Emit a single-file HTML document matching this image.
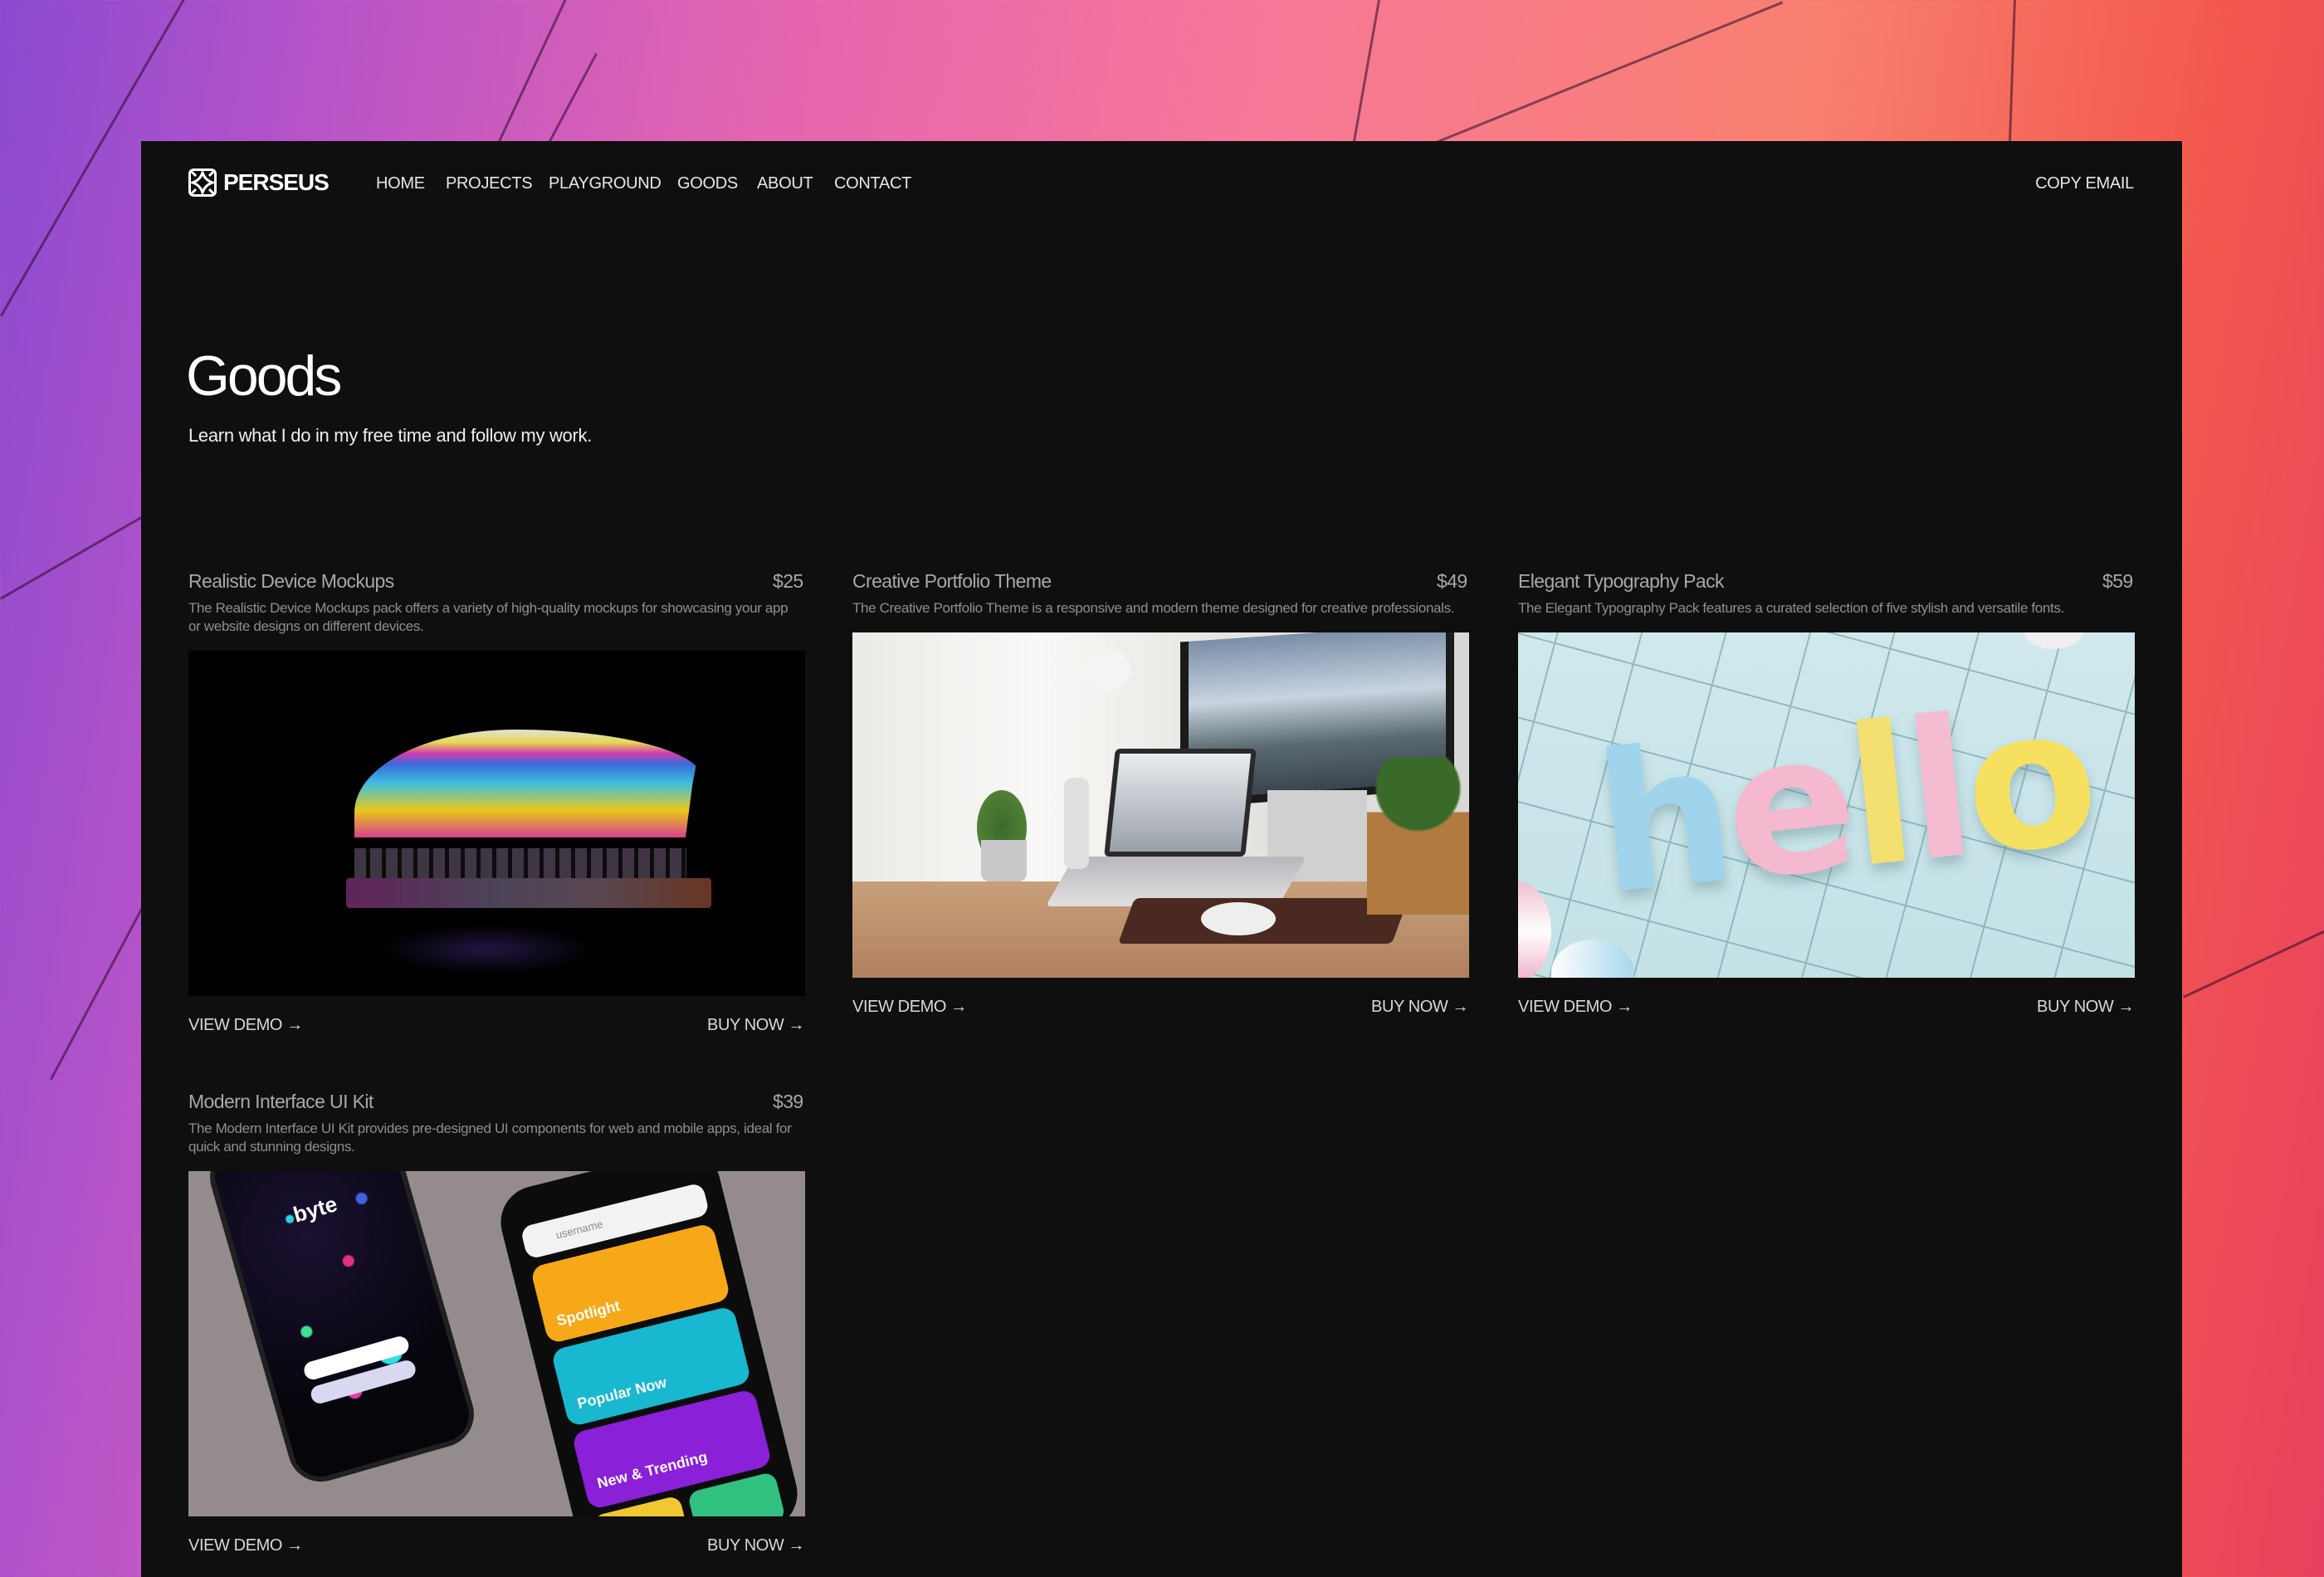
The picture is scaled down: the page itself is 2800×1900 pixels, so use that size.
<!DOCTYPE html>
<html><head><meta charset="utf-8"><style>
*{margin:0;padding:0;box-sizing:border-box}
body{width:2800px;height:1900px;overflow:hidden;font-family:"Liberation Sans",sans-serif;position:relative;
background:linear-gradient(100deg,#8a4ad0 0%,#b553c9 12%,#e465b0 30%,#f77896 50%,#f8806f 70%,#f35a4e 85%,#e8405e 100%)}
.bgl{position:absolute;height:3px;background:rgba(40,10,40,.55);transform-origin:0 0}
.panel{position:absolute;left:170px;top:170px;width:2459px;height:1730px;background:#0f0f0f}
.a{position:absolute;white-space:nowrap}
.nav{font-size:20px;color:#e6e6e6;top:210px;letter-spacing:-.3px}
.t{font-size:23px;color:#a8a8a8;letter-spacing:-.6px}
.d{font-size:17px;color:#8e8e8e;letter-spacing:-.35px;line-height:22px}
.b{font-size:20px;color:#d8d8d8;letter-spacing:-.4px}
.img{position:absolute;width:743px;height:416px;overflow:hidden}
</style></head><body>
<div class="bgl" style="left:0;top:380px;width:500px;transform:rotate(-60deg)"></div>
<div class="bgl" style="left:60px;top:1300px;width:1400px;transform:rotate(-62deg)"></div>
<div class="bgl" style="left:600px;top:170px;width:300px;transform:rotate(-65deg)"></div>
<div class="bgl" style="left:1630px;top:170px;width:200px;transform:rotate(-80deg)"></div>
<div class="bgl" style="left:1730px;top:170px;width:450px;transform:rotate(-22deg)"></div>
<div class="bgl" style="left:2420px;top:170px;width:180px;transform:rotate(-88deg)"></div>
<div class="bgl" style="left:2630px;top:1200px;width:200px;transform:rotate(-25deg)"></div>
<div class="bgl" style="left:0;top:720px;width:200px;transform:rotate(-30deg)"></div>

<div class="panel"></div>
<svg class="a" style="left:227px;top:203px" width="34" height="34" viewBox="0 0 34 34"><rect x="1.5" y="1.5" width="31" height="31" rx="5" fill="none" stroke="#fff" stroke-width="3"/><path d="M17 5 C19 11 23 15 29 17 C23 19 19 23 17 29 C15 23 11 19 5 17 C11 15 15 11 17 5Z" fill="none" stroke="#fff" stroke-width="3"/><path d="M2 2 L9 9 M32 2 L25 9 M2 32 L9 25 M32 32 L25 25" stroke="#fff" stroke-width="3"/></svg>
<div class="a" style="left:269px;top:204px;font-size:28px;font-weight:bold;color:#fff;letter-spacing:-1px">PERSEUS</div>
<div class="a nav" style="left:453px">HOME</div>
<div class="a nav" style="left:537px">PROJECTS</div>
<div class="a nav" style="left:661px">PLAYGROUND</div>
<div class="a nav" style="left:816px">GOODS</div>
<div class="a nav" style="left:912px">ABOUT</div>
<div class="a nav" style="left:1005px">CONTACT</div>
<div class="a nav" style="right:229px">COPY EMAIL</div>

<div class="a" style="left:224px;top:414px;font-size:68px;color:#fff;letter-spacing:-3px">Goods</div>
<div class="a" style="left:227px;top:512px;font-size:22px;color:#eee;letter-spacing:-.3px">Learn what I do in my free time and follow my work.</div>

<!-- card 1 -->
<div class="a t" style="left:227px;top:687px">Realistic Device Mockups</div>
<div class="a t" style="left:931px;top:687px">$25</div>
<div class="a d" style="left:227px;top:722px">The Realistic Device Mockups pack offers a variety of high-quality mockups for showcasing your app<br>or website designs on different devices.</div>
<div class="img" style="left:227px;top:784px;background:#000">
 <div style="position:absolute;left:200px;top:95px;width:420px;height:260px;border-radius:60% 70% 0 0/100% 60% 0 0;background:linear-gradient(180deg,#dfe2d8 0%,#e7d850 12%,#d33ab0 22%,#3a6ad8 32%,#3fc0e0 50%,#e8c818 75%,#d84090 100%);clip-path:polygon(0 100%,0 0,100% 0,97% 50%,95% 100%);height:130px"></div>
 <div style="position:absolute;left:200px;top:238px;width:400px;height:36px;background:repeating-linear-gradient(90deg,#6a5a70 0 14px,#151515 14px 19px);opacity:.6"></div>
 <div style="position:absolute;left:190px;top:274px;width:440px;height:36px;background:linear-gradient(90deg,#b040a0,#8a7aa0 40%,#a08090 70%,#c06040);opacity:.55;border-radius:4px"></div>
 <div style="position:absolute;left:230px;top:330px;width:260px;height:60px;background:radial-gradient(ellipse,#2a1a50,#000 70%);opacity:.8"></div>
</div>
<div class="a b" style="left:227px;top:1224px">VIEW DEMO →</div>
<div class="a b" style="left:852px;top:1224px">BUY NOW →</div>

<!-- card 2 -->
<div class="a t" style="left:1027px;top:687px">Creative Portfolio Theme</div>
<div class="a t" style="left:1731px;top:687px">$49</div>
<div class="a d" style="left:1027px;top:722px">The Creative Portfolio Theme is a responsive and modern theme designed for creative professionals.</div>
<div class="img" style="left:1027px;top:762px;background:linear-gradient(90deg,#eceae6 0%,#f8f8f6 30%,#e6e4e0 60%,#d8d8d6 100%)">
 <div style="position:absolute;left:0;top:300px;width:743px;height:116px;background:linear-gradient(180deg,#c8a07a,#b08060)"></div>
 <div style="position:absolute;left:395px;top:0;width:330px;height:200px;background:linear-gradient(180deg,#7a8ea8,#c8d4e0 40%,#5a6a70 70%,#3a4450);border:10px solid #1a1a1a;border-top:0;transform:skewY(-4deg)"></div>
 <div style="position:absolute;left:500px;top:190px;width:120px;height:110px;background:#d0d0d0"></div>
 <div style="position:absolute;left:310px;top:140px;width:170px;height:130px;background:linear-gradient(180deg,#e8ecf0,#9aa0a8);border:6px solid #2a2a2a;border-radius:6px;transform:skewX(-6deg)"></div>
 <div style="position:absolute;left:250px;top:270px;width:280px;height:60px;background:linear-gradient(180deg,#b8b8bc,#e0e0e2);transform:skewX(-30deg);border-radius:6px"></div>
 <div style="position:absolute;left:330px;top:320px;width:330px;height:55px;background:#4a2a20;transform:skewX(-20deg);border-radius:6px"></div>
 <div style="position:absolute;left:420px;top:325px;width:90px;height:40px;background:#eee;border-radius:50%"></div>
 <div style="position:absolute;left:150px;top:190px;width:60px;height:90px;background:radial-gradient(#3a6a2a,#5a8a3a);border-radius:50%"></div>
 <div style="position:absolute;left:155px;top:250px;width:55px;height:50px;background:#c8c8c8;border-radius:0 0 10px 10px"></div>
 <div style="position:absolute;left:255px;top:175px;width:30px;height:110px;background:#e0e0e0;border-radius:10px"></div>
 <div style="position:absolute;left:620px;top:150px;width:123px;height:190px;background:radial-gradient(circle at 50% 20%,#3a6a2a 30%,transparent 32%),linear-gradient(180deg,transparent 35%,#b07a40 35%)"></div>
 <div style="position:absolute;left:275px;top:20px;width:60px;height:50px;background:#f4f4f4;border-radius:50%"></div>
</div>
<div class="a b" style="left:1027px;top:1202px">VIEW DEMO →</div>
<div class="a b" style="left:1652px;top:1202px">BUY NOW →</div>

<!-- card 3 -->
<div class="a t" style="left:1829px;top:687px">Elegant Typography Pack</div>
<div class="a t" style="left:2533px;top:687px">$59</div>
<div class="a d" style="left:1829px;top:722px">The Elegant Typography Pack features a curated selection of five stylish and versatile fonts.</div>
<div class="img" style="left:1829px;top:762px;background:linear-gradient(180deg,#cfe8ec,#c4e2e6)">
 <div style="position:absolute;left:-200px;top:-200px;width:1200px;height:900px;transform:rotate(15deg);background:repeating-linear-gradient(90deg,transparent 0 96px,#7aa6ac 96px 98px),repeating-linear-gradient(0deg,transparent 0 96px,#7aa6ac 96px 98px);opacity:.7"></div>
 <div style="position:absolute;left:95px;top:70px;font-family:'DejaVu Sans',sans-serif;font-weight:bold;font-size:230px;letter-spacing:-8px;transform:rotate(-6deg);text-shadow:0 10px 14px rgba(80,120,130,.35)"><span style="color:#9fd4ec">h</span><span style="color:#f4b8cf">e</span><span style="color:#f4e070">l</span><span style="color:#f4bcd0">l</span><span style="color:#f6e060">o</span></div>
 <div style="position:absolute;left:-40px;top:300px;width:80px;height:120px;border-radius:50%;background:linear-gradient(180deg,#f0c0d0,#fff,#f0b0c8)"></div>
 <div style="position:absolute;left:40px;top:370px;width:100px;height:80px;border-radius:50%;background:linear-gradient(90deg,#fff,#a8d8ec)"></div>
 <div style="position:absolute;left:610px;top:-20px;width:70px;height:40px;border-radius:50%;background:#f0eef0"></div>
</div>
<div class="a b" style="left:1829px;top:1202px">VIEW DEMO →</div>
<div class="a b" style="left:2454px;top:1202px">BUY NOW →</div>

<!-- card 4 -->
<div class="a t" style="left:227px;top:1314px">Modern Interface UI Kit</div>
<div class="a t" style="left:931px;top:1314px">$39</div>
<div class="a d" style="left:227px;top:1349px">The Modern Interface UI Kit provides pre-designed UI components for web and mobile apps, ideal for<br>quick and stunning designs.</div>
<div class="img" style="left:227px;top:1411px;background:#948b8c">
 <div style="position:absolute;left:70px;top:-60px;width:230px;height:420px;border-radius:40px;background:radial-gradient(circle at 40% 30%,#1a1030,#05050a 70%);border:6px solid #202020;transform:rotate(-16deg)">
  <div style="position:absolute;left:20px;top:30px;width:180px;height:340px;background:radial-gradient(circle at 30% 20%,#30d0e0 0 4px,transparent 6px),radial-gradient(circle at 60% 40%,#e03080 0 6px,transparent 8px),radial-gradient(circle at 20% 60%,#40e090 0 6px,transparent 8px),radial-gradient(circle at 70% 75%,#30e0e0 0 14px,transparent 16px),radial-gradient(circle at 40% 85%,#e040a0 0 8px,transparent 10px),radial-gradient(circle at 80% 20%,#4060e0 0 6px,transparent 8px);"></div>
  <div style="position:absolute;left:80px;top:80px;color:#fff;font-weight:bold;font-size:26px">byte</div>
  <div style="position:absolute;left:40px;top:270px;width:130px;height:22px;background:#fff;border-radius:12px"></div>
  <div style="position:absolute;left:40px;top:300px;width:130px;height:22px;background:#d8d8f0;border-radius:12px"></div>
 </div>
 <div style="position:absolute;left:420px;top:-10px;width:270px;height:470px;border-radius:44px;background:#0c0c0c;transform:rotate(-14deg)">
  <div style="position:absolute;left:22px;top:45px;width:226px;height:40px;background:#f2f2f2;border-radius:14px;color:#888;font-size:13px;padding:12px 0 0 40px">username</div>
  <div style="position:absolute;left:22px;top:95px;width:226px;height:95px;background:#f6a818;border-radius:16px;color:#fff;font-weight:bold;font-size:18px;padding:60px 0 0 16px">Spotlight</div>
  <div style="position:absolute;left:22px;top:198px;width:226px;height:95px;background:#18b8d0;border-radius:16px;color:#fff;font-weight:bold;font-size:18px;padding:60px 0 0 16px">Popular Now</div>
  <div style="position:absolute;left:22px;top:301px;width:226px;height:95px;background:#8a20d8;border-radius:16px;color:#fff;font-weight:bold;font-size:18px;padding:56px 0 0 16px">New &amp; Trending</div>
  <div style="position:absolute;left:22px;top:404px;width:108px;height:60px;background:#f0c830;border-radius:14px"></div>
  <div style="position:absolute;left:140px;top:404px;width:108px;height:60px;background:#30c080;border-radius:14px"></div>
 </div>
</div>
<div class="a b" style="left:227px;top:1851px">VIEW DEMO →</div>
<div class="a b" style="left:852px;top:1851px">BUY NOW →</div>
</body></html>
